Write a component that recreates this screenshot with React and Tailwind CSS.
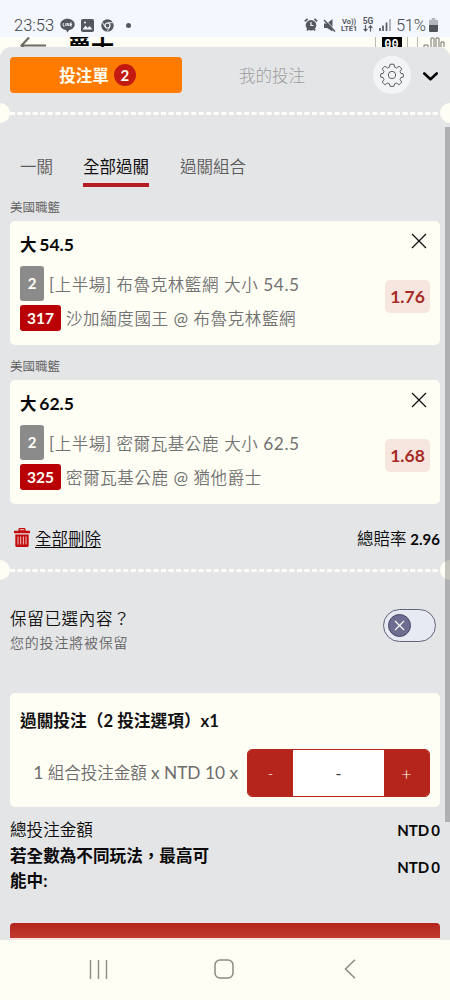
import React from "react";

function StatusBar() {
  return (
    <div className="flex h-[37px] shrink-0 items-end bg-[#f4f8fe] pr-[12px] pb-[2px] pl-[14px] font-['Roboto',sans-serif] text-[#55585d]">
      <span className="w-[40px] text-[16.5px] leading-[19px] whitespace-nowrap font-light text-[#3f4247]">23:53</span>
      <svg className="mb-[2px] ml-[6px]" width="15" height="15" viewBox="0 0 15 15">
        <path d="M7.5 0.8C3.4 0.8 0.3 3.3 0.3 6.5c0 2.900 2.500 5 5.700 5.600L7.300 14.500l1.700-2.300c3.300-.7 5.700-2.900 5.700-5.700 0-3.200-3.100-5.700-7.200-5.700z" fill="#55585d" />
        <path d="M3.200 5v3h1.500M5.900 5v3M7.200 8V5l1.800 3V5M12 5h-1.500v3H12M10.500 6.500H12" stroke="#f4f8fe" fill="none" strokeWidth=".9" />
      </svg>
      <svg className="mb-[3px] ml-[6px]" width="13" height="13" viewBox="0 0 13 13">
        <rect width="13" height="13" rx="1.800" fill="#55585d" />
        <path d="M1.500 10.500 4.500 6.500l2.200 2.400 1.800-1.800 3 3.400z" fill="#f4f8fe" />
        <circle cx="4" cy="3.500" r="1" fill="#f4f8fe" />
      </svg>
      <svg className="mb-[3px] ml-[7px]" width="13" height="13" viewBox="0 0 13 13">
        <circle cx="6.500" cy="6.500" r="6.200" fill="#55585d" />
        <circle cx="6.500" cy="6.500" r="2.500" fill="none" stroke="#f4f8fe" strokeWidth="1.200" />
        <path d="M6.500 3.700h5.500M4.200 8 1.400 3.300M8.700 8 6 12.600" stroke="#f4f8fe" strokeWidth=".9" />
      </svg>
      <span className="mb-[7px] ml-[12px] h-[5px] w-[5px] rounded-full bg-[#55585d]" />
      <div className="grow" />
      <svg className="mb-[4px]" width="14" height="13" viewBox="0 0 14 13">
        <circle cx="7" cy="7.200" r="5.300" fill="#55585d" />
        <path d="M.8 3.400 3.600.8M13.200 3.400 10.400.8M3 12.500l1-1.500M11 12.500 10 11" stroke="#55585d" strokeWidth="1.700" />
        <path d="M7 4v3.500h2.500" stroke="#f4f8fe" fill="none" strokeWidth="1.200" />
      </svg>
      <svg className="mb-[3px] ml-[5px]" width="13" height="13" viewBox="0 0 13 13">
        <path d="M1 4.500h3L9.500 0v12.500L4 9H1z" fill="#55585d" />
        <path d="M1.800.3 12.800 11.500" stroke="#f4f8fe" strokeWidth="1" />
        <path d="M1 1l11 11.500" stroke="#55585d" strokeWidth="1.500" />
      </svg>
      <div className="mb-[3px] ml-[5px] w-[18px] text-[7.500px] leading-[7px] font-bold whitespace-nowrap">
        <div className="pl-[1px]">Vo))</div>
        <div>LTE1</div>
      </div>
      <div className="mb-[3px] ml-[3px] flex w-[12px] flex-col items-center">
        <span className="text-[8.500px] leading-[7px] font-bold">5G</span>
        <svg width="10" height="7" viewBox="0 0 10 7">
          <path d="M2.500 0v5.500M.6 3.800l1.900 2 1.900-2M7.500 6.500V1M5.600 2.800l1.900-2 1.900 2" stroke="#55585d" fill="none" strokeWidth="1.200" />
        </svg>
      </div>
      <svg className="mb-[4px] ml-[5px]" width="12" height="12" viewBox="0 0 12 12">
        <path d="M1 12V9M4 12V6.500" stroke="#55585d" strokeWidth="1.700" />
        <path d="M7.500 12V3.500" stroke="#55585d" strokeWidth="1.700" />
        <path d="M11 12V0" stroke="#9a9da2" strokeWidth="1.500" />
      </svg>
      <span className="ml-[5px] w-[31px] text-[16.500px] leading-[19px] tracking-[-0.300px] whitespace-nowrap text-[#45484d] font-light">51%</span>
      <svg className="mb-[3px] ml-[2px]" width="9" height="14" viewBox="0 0 9 14">
        <path d="M0 3q0-1.200 1.200-1.200H2.800V0h3.400v1.800h1.600Q9 1.800 9 3v4H0z" fill="#b4b7bb" />
        <path d="M0 7h9v5.500Q9 14 7.800 14H1.200Q0 14 0 12.800z" fill="#505358" />
      </svg>
    </div>
  );
}

function PageBehind() {
  return (
    <div className="flex h-[10px] shrink-0 items-start overflow-hidden bg-[#fffef5]">
      <svg className="ml-[20px] shrink-0" width="27" height="18" viewBox="0 0 27 18">
        <path d="M9 .5 1.500 8.500 9 16.500M2 8.500h24" fill="none" stroke="#6d6b63" strokeWidth="2.200" />
      </svg>
      <span className="ml-[21px] text-[23px] leading-[20px] font-bold text-black">爵士</span>
      <div className="grow" />
      <div className="flex h-[24px] w-[33px] shrink-0 justify-center border-x border-[#bbb7ac]">
        <span className="h-[20px] w-[20px] bg-black text-center font-['Liberation_Mono',monospace] text-[12px] leading-[17px] font-bold text-white">00</span>
      </div>
      <div className="ml-[9px] flex h-[24px] w-[33px] shrink-0 items-start border-l border-[#bbb7ac] pl-[5px]">
        <svg width="22" height="18" viewBox="0 0 22 18">
          <path d="M1 16V8h4v8M8 16V1h3v15M13 16V1h3v15M18 16V5h3v11" fill="none" stroke="#77736a" />
        </svg>
      </div>
    </div>
  );
}

function Divider() {
  return (
    <div className="flex h-[20px] shrink-0 items-center overflow-hidden">
      <span className="-ml-[10px] h-[20px] w-[20px] shrink-0 rounded-full bg-[#fffef5]" />
      <svg className="mt-[2px] h-[4px] grow" preserveAspectRatio="none">
        <line x1="0" y1="1.500" x2="430" y2="1.500" stroke="#fffef8" strokeWidth="3" strokeDasharray="5 2.550" />
      </svg>
      <span className="-mr-[10px] h-[20px] w-[20px] shrink-0 rounded-full bg-[#fffef5]" />
    </div>
  );
}

function Header() {
  return (
    <div className="flex h-[56px] shrink-0 items-center pl-[10px]">
      <button className="flex h-[36px] w-[172px] items-center justify-center gap-[5px] rounded-[4px] bg-[#ff7b00] pl-[3px] text-[#fffdf0]">
        <span className="mt-px text-[16.500px] leading-[20px] font-bold">投注單</span>
        <span className="h-[22px] w-[22px] rounded-full bg-[#c21a12] text-center text-[15px] leading-[22px] font-bold">2</span>
      </button>
      <span className="mt-px ml-[57px] w-[80px] text-[16.500px] leading-[20px] font-light text-[#9c9c9c]">我的投注</span>
      <span className="ml-[54px] flex h-[38px] w-[38px] items-center justify-center rounded-full bg-[#f3f4f6]">
        <svg width="24" height="24" viewBox="0 0 24 24" fill="none" stroke="#4f5052" strokeWidth=".9" strokeLinejoin="round">
          <circle cx="12" cy="12" r="3.700" />
          <path d="M10 1.200h4l.6 3 1.900.8 2.600-1.800 2.700 2.700L20 8.500l.8 1.900 2.500.5v3.200l-2.500.5-.8 1.900 1.800 2.600-2.700 2.700-2.600-1.800-1.900.8-.6 2.500h-4l-.6-2.500-1.900-.8-2.600 1.800-2.700-2.700L4 16.500l-.8-1.900-2.500-.5v-3.200l2.500-.5L4 8.500 2.200 5.900l2.700-2.700L7.500 5l1.900-.8z" />
        </svg>
      </span>
      <svg className="mt-[2px] ml-[12px]" width="15" height="9" viewBox="0 0 15 9">
        <path d="M1.300 1.500 7.500 7.300 13.700 1.500" fill="none" stroke="#080808" strokeWidth="2.600" strokeLinecap="round" strokeLinejoin="round" />
      </svg>
    </div>
  );
}

function Tabs() {
  return (
    <div className="flex h-[32px] pl-[20px] text-[16.500px] leading-[24px] font-[350] text-[#5c5c5c]">
      <span className="w-[33px] whitespace-nowrap">一關</span>
      <span className="ml-[30px] h-[32px] border-b-4 border-[#b51b22] font-normal text-[#111]">全部過關</span>
      <span className="ml-[31px]">過關組合</span>
    </div>
  );
}

function BetCard({ line, number, market, away, home, odds }) {
  return (
    <>
      <div className="h-[20px] pl-[10px] text-[12.500px] leading-[20px] font-[350] text-[#5c5c5c]">美國職籃</div>
      <div className="mx-[10px] mt-[3px] h-[124px] rounded-[5px] bg-[#fffef5] pt-[12px] pr-[10px] pl-[10px]">
        <div className="flex h-[24px] items-start justify-between">
          <span className="text-[17.500px] leading-[24px] font-bold text-[#080808] [word-spacing:-1.500px]"><span className="text-[16.500px]">大</span> {line}</span>
          <svg className="mr-[3px]" width="16" height="16" viewBox="0 0 16 16">
            <path d="M1 1l14 14M15 1 1 15" stroke="#111" strokeWidth="1.300" />
          </svg>
        </div>
        <div className="flex items-center justify-between pt-[9px]">
          <div className="text-[16.500px] tracking-[0.600px] text-[#727272]">
            <div className="flex h-[35px] items-center">
              <span className="mr-[5px] h-[35px] w-[24px] rounded-[3px] bg-[#8b8b8b] text-center text-[15px] leading-[35px] font-bold tracking-normal text-[#fffef5]">2</span>
              <span className="mt-[2px] leading-[24px] whitespace-nowrap">[<span className="font-[350]">上半場</span>] <span className="font-[350]">{market} 大小</span> <span className="text-[17.300px]">{line}</span></span>
            </div>
            <div className="mt-[4px] flex h-[26px] items-center">
              <span className="mr-[5px] h-[26px] w-[41px] rounded-[3px] bg-[#b90005] text-center text-[15.500px] leading-[26px] font-bold tracking-normal text-[#fffef5]">{number}</span>
              <span className="mt-[2px] leading-[24px] whitespace-nowrap"><span className="font-[350]">{away}</span> <span className="text-[17.500px] leading-[20px]">@</span> <span className="font-[350]">{home}</span></span>
            </div>
          </div>
          <span className="-mt-[5px] h-[33px] w-[45px] rounded-[5px] bg-[#f6e6df] text-center text-[17.500px] leading-[33px] font-bold text-[#a72a25]">{odds}</span>
        </div>
      </div>
    </>
  );
}

function DeleteRow() {
  return (
    <div className="flex h-[24px] items-center pr-[10px] pl-[14px] text-[16.500px] leading-[24px]">
      <svg className="-mt-[2px]" width="16" height="20" viewBox="0 0 16 20">
        <path d="M5 1.800q0-1.300 1.300-1.300h3.400q1.300 0 1.300 1.300v1H5z" fill="none" stroke="#c30c0c" strokeWidth="1.300" />
        <path d="M0 2.800h16v2.400H0zM1.300 6.500h13.400v11q0 1.500-1.500 1.500H2.800q-1.500 0-1.500-1.500z" fill="#c30c0c" />
        <path d="M4 8.500v8M6.700 8.500v8M9.400 8.500v8M12 8.500v8" stroke="#f1d9d9" strokeWidth=".9" />
      </svg>
      <span className="ml-[5px] font-[350] text-[#080808] underline decoration-1 underline-offset-[2px]">全部刪除</span>
      <span className="ml-auto text-[15px] text-[#080808]"><span className="text-[16.500px] font-[350]">總賠率</span> <b>2.96</b></span>
    </div>
  );
}

function KeepRow() {
  return (
    <div className="mt-[27px] flex h-[50px] pl-[10px]">
      <div>
        <div className="h-[25px] text-[16.500px] leading-[25px] tracking-[0.700px] text-[#111] font-[350]">保留已選內容？</div>
        <div className="h-[22px] text-[14px] leading-[22px] tracking-[0.800px] font-[350] text-[#666]">您的投注將被保留</div>
      </div>
      <div className="mt-[2px] mr-[14px] ml-auto flex h-[33px] w-[53px] items-center rounded-full border border-[#62637c] bg-[#e7eaf3] pl-[4px]">
        <span className="flex h-[23px] w-[23px] items-center justify-center rounded-full border border-[#474866] bg-[#6d6d91]">
          <svg width="11" height="11" viewBox="0 0 11 11">
            <path d="M1 1l9 9M10 1 1 10" stroke="#fff" strokeWidth="1.100" />
          </svg>
        </span>
      </div>
    </div>
  );
}

function StakeCard() {
  return (
    <div className="mx-[10px] mt-[36px] h-[114px] rounded-[5px] bg-[#fffef5] px-[10px] pt-[16px]">
      <div className="h-[24px] text-[16.700px] leading-[24px] font-bold whitespace-nowrap text-[#111]">過關投注（2 投注選項）x1</div>
      <div className="mt-[16px] flex h-[48px] items-center justify-end">
        <span className="mt-px mr-[9px] text-[16.500px] whitespace-nowrap text-[#6c6c6c]"><span className="text-[17.500px]">1</span> <span className="font-[350]">組合投注金額</span> <span className="text-[17.300px]">x NTD 10 x</span></span>
        <div className="flex h-[48px] w-[183px] overflow-hidden rounded-[5px] border border-[#b6251b] text-center text-[16px] leading-[46px]">
          <span className="w-[45px] bg-[#b6251b] font-light text-[#fffef5]">-</span>
          <span className="grow bg-white text-[#333]">-</span>
          <span className="w-[45px] bg-[#b6251b] text-[18px] font-light text-[#fffef5]">+</span>
        </div>
      </div>
    </div>
  );
}

function Totals() {
  return (
    <div className="mt-[11px] pr-[10px] pl-[10px] text-[16.600px] leading-[25px] text-[#080808]">
      <div className="flex h-[25px] items-center justify-between">
        <span className="font-[350]">總投注金額</span>
        <span className="-mt-px text-[15px] font-bold [word-spacing:-1.500px]">NTD 0</span>
      </div>
      <div className="flex h-[50px] items-center justify-between">
        <span className="mt-[2px] w-[205px] font-bold">若全數為不同玩法，最高可能中:</span>
        <span className="-mt-px text-[15px] font-bold [word-spacing:-1.500px]">NTD 0</span>
      </div>
    </div>
  );
}

function NavBar() {
  return (
    <div className="flex h-[60px] shrink-0 items-center bg-[#fffef5] pb-[2px] pl-[89px]">
      <svg width="19" height="19" viewBox="0 0 19 19">
        <path d="M1.500 0v19M9.500 0v19M17.500 0v19" stroke="#8c8982" strokeWidth="1.400" />
      </svg>
      <svg className="ml-[106px]" width="20" height="20" viewBox="0 0 20 20">
        <rect x="1" y="1" width="18" height="18" rx="5" fill="none" stroke="#8c8982" strokeWidth="1.500" />
      </svg>
      <svg className="ml-[110px]" width="12" height="20" viewBox="0 0 12 20">
        <path d="M11 .7 1.500 10 11 19.300" fill="none" stroke="#8c8982" strokeWidth="1.500" />
      </svg>
    </div>
  );
}

export default function App() {
  return (
    <div className="flex h-[1000px] w-[450px] flex-col overflow-hidden bg-[#fffef5] font-['Lato','Noto_Sans_CJK_TC',sans-serif]">
      <StatusBar />
      <PageBehind />
      <main className="relative flex h-[893px] shrink-0 flex-col overflow-hidden rounded-t-[11px] bg-[#e4e5e7]">
        <Header />
        <Divider />
        <div className="h-[32px] shrink-0" />
        <Tabs />
        <div className="h-[11px]" />
        <BetCard line="54.5" number="317" market="布魯克林籃網" away="沙加緬度國王" home="布魯克林籃網" odds="1.76" />
        <div className="h-[12px]" />
        <BetCard line="62.5" number="325" market="密爾瓦基公鹿" away="密爾瓦基公鹿" home="猶他爵士" odds="1.68" />
        <div className="h-[23px]" />
        <DeleteRow />
        <div className="h-[9px]" />
        <Divider />
        <KeepRow />
        <StakeCard />
        <Totals />
        <div className="mx-[10px] mt-[30px] h-[15px] shrink-0 rounded-t-[4px] bg-gradient-to-b from-[#b3231d] to-[#c23a2e]" />
        <div className="mx-[10px] h-[2px] shrink-0 bg-[#f7e6df]" />
        <div className="absolute top-[80px] right-0 h-[695px] w-[5px] bg-black/23" />
      </main>
      <NavBar />
    </div>
  );
}
